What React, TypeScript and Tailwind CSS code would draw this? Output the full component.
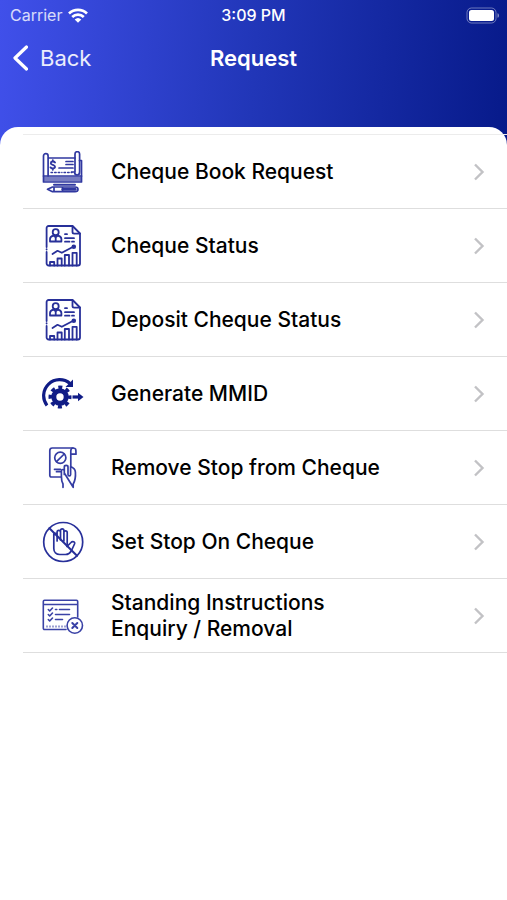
import React from 'react';

const ChequeBookIcon = () => (
  <svg viewBox="0 0 42 42" className="size-[42px]" fill="none" stroke="#3038a0" strokeWidth="1.7" strokeLinecap="round" strokeLinejoin="round">
    <path d="M1.5 31V5a2.3 2.3 0 0 1 4.600 0v20M6 7h27M1.5 31h38V9.500h-2" />
    <path d="M33 21V3a2.300 2.300 0 0 1 4.600 0v18c0 4-5 4-5 0h-3" />
    <path d="M1.500 25h38" />
    <path d="M1.500 28h38" strokeWidth="5" strokeLinecap="butt" opacity="0.65" />
    <path d="M13 11.500c-1-1.500-4.200-1.300-4.200.7s4.200 1.500 4.200 3.600-3.500 2.100-4.500.6M10.800 9.200v1.300M10.800 17.500v1.300" strokeWidth="1.900" />
    <path d="M24 10.500h7M24 13.500h7M17 17h14" />
    <path d="M9 21.500h11M22 21.500h8" strokeDasharray="1.600 2" strokeWidth="1.300" />
    <path d="M12 33.800h21" strokeWidth="2" />
    <path d="M5.500 38.300l5-2.300H33c4 0 4 4.700 0 4.700H10.500zM12 36v4.700M20.500 36v4.700" />
    <path d="M21 38.300h12" strokeWidth="3" />
  </svg>
);

const StatusIcon = () => (
  <svg viewBox="0 0 42 42" className="size-[42px]" fill="none" stroke="#283099" strokeWidth="1.8" strokeLinecap="round" strokeLinejoin="round">
    <path d="M4.600 22V3a2 2 0 0 1 2-2h24L38 8.500v30a2 2 0 0 1-2 2H6.600a2 2 0 0 1-2-2V27M4.600 24.200v.3" />
    <path d="M30.500 1.500V7c0 1 .6 1.600 1.600 1.600H38" />
    <circle cx="13.700" cy="7.200" r="3" />
    <path d="M8 16.500V14c0-2 1.600-3 3.600-3.400l2.100 1.800 2.100-1.800c2 .4 3.600 1.400 3.600 3.400v2.500zM13.700 12.500V16" />
    <path d="M23 9.200h2M23 13.200h9M23 16.700h4.500M30 16.700h2" />
    <path d="M10.500 29l5-3.200 4.300 2 10.500-5.600" />
    <circle cx="31.800" cy="21.700" r="1.400" fill="#283099" />
    <path d="M8 40.500V37h4.200v3.500M15.500 40.500v-7h4.200v7M22.800 40.500V30H27v10.500M30.500 40.500V27.800h4.200v12.700" />
  </svg>
);

const GenerateIcon = () => (
  <svg viewBox="0 0 42 42" className="size-[42px]" fill="none" stroke="#101c86">
    <path d="M5 32.500A16 16 0 0 1 28 10.500" strokeWidth="3.200" />
    <path d="M31 6.500v7.500h-7.500z" fill="#101c86" stroke="none" />
    <circle cx="18" cy="24" r="6.200" strokeWidth="5" />
    <circle cx="18" cy="24" r="9.500" strokeWidth="4" strokeDasharray="3.900 3.561" strokeDashoffset="1.950" />
    <path d="M30.500 24H37" strokeWidth="3.200" />
    <path d="M36 19.700l5.500 4.300-5.500 4.300z" fill="#101c86" stroke="none" />
  </svg>
);

const RemoveStopIcon = () => (
  <svg viewBox="0 0 42 42" className="size-[42px]" fill="none" stroke="#343ca3" strokeWidth="1.700" strokeLinecap="round" strokeLinejoin="round">
    <path d="M18.500 30H9.500a1.700 1.700 0 0 1-1.700-1.700V3.500a2.500 2.500 0 0 1 2.500-2.500H31c3 0 3 1 3 6.200h-5" />
    <path d="M31 1c-1.700.2-2.200 1.200-2.200 3v15" />
    <circle cx="18.300" cy="10.800" r="5.600" />
    <path d="M14.500 14.700l7.700-7.700M12.500 22.300h6M14.500 24.700h4" />
    <path d="M21 40.300V37C19.600 34.600 19.400 32 19.400 29.500V24C19.400 22 22.300 22 22.300 24V27.500M22.300 26V20C22.300 17.900 26 17.900 26 20V27.500C26 29.300 28.600 29.300 28.600 27.500V19.500C31.500 20.700 33.200 22.500 33.400 25C33.700 29 33.300 33.500 31.200 37V40.300Z" />
  </svg>
);

const SetStopIcon = () => (
  <svg viewBox="0 0 42 42" className="size-[42px]" fill="none" stroke="#28309a" strokeWidth="1.700" strokeLinecap="round" strokeLinejoin="round">
    <circle cx="21.200" cy="21" r="19.500" />
    <path d="M7.400 7.200L35 34.800" strokeWidth="2" />
    <path d="M11.800 13v14.500c0 3.500 2.500 6 6 6h5.700c3.200 0 4.600-1.300 6-4l3-6.500c1-2.300-2-3.200-3.500-1.500L25 25.500" />
    <path d="M11.800 14c0-2.200 3.300-2.200 3.300 0v6M15.100 15v-4c0-2.200 3.400-2.200 3.400 0v8M18.500 11V9.500c0-2.200 3.400-2.200 3.400 0V20M21.900 11.500c0-2.200 3.300-2.200 3.300 0V25" />
  </svg>
);

const StandingIcon = () => (
  <svg viewBox="0 0 42 42" className="size-[42px]" fill="none" stroke="#3a42a6" strokeWidth="1.600" strokeLinecap="round" strokeLinejoin="round">
    <path d="M24 34.500H2.500a1.200 1.200 0 0 1-1.200-1.200V6.500c0-.7.500-1.200 1.200-1.200h32c.7 0 1.200.5 1.200 1.200V22M1.300 9.500h34.400" />
    <path d="M6.300 14.500l1.400 1.500 2.800-3M6.300 19.500l1.400 1.500 2.800-3M6.300 24.500l1.400 1.500 2.800-3" />
    <path d="M13.500 14.500h1.300M17.500 14.500h10M13.500 19.500h14M13.500 24.500h7" />
    <path d="M4.500 31.500h19" strokeDasharray="1 2" strokeWidth="2" strokeLinecap="butt" />
    <circle cx="32.800" cy="30.500" r="7.700" fill="#fff" />
    <path d="M30.300 28l5 5M35.300 28l-5 5" strokeWidth="2" />
  </svg>
);

const items = [
  { label: 'Cheque Book Request', Icon: ChequeBookIcon },
  { label: 'Cheque Status', Icon: StatusIcon },
  { label: 'Deposit Cheque Status', Icon: StatusIcon },
  { label: 'Generate MMID', Icon: GenerateIcon },
  { label: 'Remove Stop from Cheque', Icon: RemoveStopIcon },
  { label: 'Set Stop On Cheque', Icon: SetStopIcon },
  { label: 'Standing Instructions Enquiry / Removal', Icon: StandingIcon },
];

const StatusBar: React.FC = () => (
  <div className="grid h-[30px] grid-cols-3 items-center px-2 text-base font-medium">
    <div className="flex items-center gap-[6px] pl-[2px]">
      <span className="font-normal text-white/80">Carrier</span>
      <svg viewBox="0 0 20 15" className="h-[15px] w-5" fill="none" stroke="#fff" strokeWidth="2.700">
        <path d="M1 5.500a13 13 0 0 1 18 0M4.200 9a8.400 8.400 0 0 1 11.600 0" />
        <path d="M6.700 11.600a4.800 4.800 0 0 1 6.600 0L10 14.800z" fill="#fff" stroke="none" />
      </svg>
    </div>
    <span className="text-center whitespace-nowrap">3:09 PM</span>
    <svg viewBox="0 0 33 17" className="h-[17px] w-[33px] justify-self-end" fill="none">
      <rect x="1" y="1" width="29" height="15" rx="4.500" stroke="#fff" strokeOpacity="0.400" />
      <rect x="3" y="3" width="25" height="11" rx="2.500" fill="#fff" />
      <path d="M31.500 6.200v4.600c2-.6 2-4 0-4.600z" fill="#fff" fillOpacity="0.500" />
    </svg>
  </div>
);

const App: React.FC = () => {
  return (
    <div className="min-h-screen bg-white font-['Inter',sans-serif] text-black">
      {/* Header gradient, the sheet overlaps its bottom edge */}
      <header className="h-[148px] bg-linear-[94deg,#4050ea_0%,#2136b8_50%,#071a8a_100%] text-white">
        <StatusBar />
        <nav className="grid h-14 grid-cols-3 items-center px-3 text-[22px]">
          <button type="button" className="flex items-center gap-3 text-white/90">
            <svg viewBox="0 0 16 26" className="h-[26px] w-4" fill="none" stroke="#fff" strokeWidth="3.200" strokeLinecap="round" strokeLinejoin="round">
              <path d="M14.500 2L3 13l11.500 11" />
            </svg>
            Back
          </button>
          <h1 className="text-center font-semibold">Request</h1>
        </nav>
      </header>

      <main className="-mt-[21px] rounded-t-[18px] bg-white pt-[7px]">
        <ul className="ml-[23px] border-t border-[#ececec]">
          {items.map(({ label, Icon }) => (
            <li key={label} className="border-b border-[#dedede]">
              <a href="#" className="flex min-h-[73px] items-center pr-[22px] pl-[19px]">
                <Icon />
                <span className="ml-[27px] max-w-[280px] text-[21px] leading-[26px] font-medium">{label}</span>
                <svg viewBox="0 0 12 18" className="ml-auto h-[18px] w-3 shrink-0" fill="none" stroke="#c2c2c5" strokeWidth="2.400">
                  <path d="M2 1.500L9.500 9 2 16.500" />
                </svg>
              </a>
            </li>
          ))}
        </ul>
      </main>
    </div>
  );
};

export default App;
